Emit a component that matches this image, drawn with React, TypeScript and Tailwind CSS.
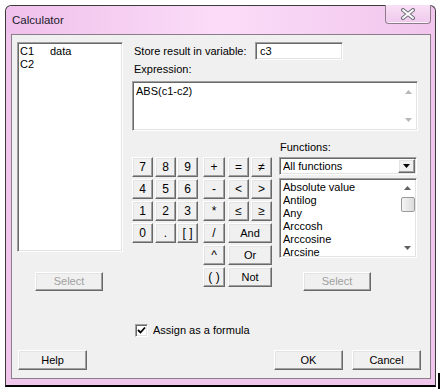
import { ReactNode } from "react";

const raised =
  "flex items-center justify-center bg-[#f0f0f0] border border-t-white border-l-white border-r-[#696969] border-b-[#696969] shadow-[inset_-1px_-1px_0_#a0a0a0,inset_1px_1px_0_#e3e3e3]";
const sunken =
  "bg-white border border-t-[#a0a0a0] border-l-[#a0a0a0] border-r-white border-b-white shadow-[inset_1px_1px_0_#696969,inset_-1px_-1px_0_#e3e3e3]";

function Btn({ children, className = "", disabled = false }: { children: ReactNode; className?: string; disabled?: boolean }) {
  return (
    <div className={`${raised} ${disabled ? "text-[#a0a0a0]" : "text-black"} ${className}`}>{children}</div>
  );
}

function UpArrow({ color }: { color: string }) {
  return (
    <svg width="7" height="4" viewBox="0 0 7 4">
      <path d="M3.5 0 L7 4 L0 4 Z" fill={color} />
    </svg>
  );
}

function DownArrow({ color }: { color: string }) {
  return (
    <svg width="7" height="4" viewBox="0 0 7 4">
      <path d="M0 0 L7 0 L3.5 4 Z" fill={color} />
    </svg>
  );
}

const functions = ["Absolute value", "Antilog", "Any", "Arccosh", "Arccosine", "Arcsine"];

export default function App() {
  return (
    <div className="relative w-[441px] h-[391px] bg-white font-['Liberation_Sans',Arial,sans-serif] text-[11px] leading-[13px] text-black overflow-hidden">
      <div className="ml-[5px] mt-[5px] w-[431px] h-[382px] flex flex-col border border-[#3c3c3c] border-b-2 border-b-black rounded-t-[6px] bg-[#f1c6ed]">
        {/* title bar */}
        <div className="flex h-[28px] rounded-t-[6px] bg-linear-to-r from-[#efc0eb] via-[#fbdcf8] to-[#f1c5ed]">
          <div className="pl-[6px] flex items-center pt-[1px] text-[11.5px] text-[#1a1a2a]">Calculator</div>
          <div className="ml-auto mr-[4px] -mt-px w-[46px] h-[19px] flex items-center justify-center rounded-b-[4px] border border-t-0 border-[#8c7c8a] bg-linear-to-b from-[#f8e0f6] to-[#efc8ec] shadow-[inset_0_-1px_0_#fff3fd]">
            <svg width="16" height="12" viewBox="0 0 16 12">
              <path d="M3 2 L13 10 M13 2 L3 10" stroke="#6f6f7a" strokeWidth="4" strokeLinecap="round" />
              <path d="M3 2 L13 10 M13 2 L3 10" stroke="#ffffff" strokeWidth="2" strokeLinecap="round" />
            </svg>
          </div>
        </div>

        {/* client area */}
        <div className="ml-[5px] w-[420px] h-[345px] border border-[#8a7f89] bg-[#f0f0f0] flex flex-col">
          <div className="flex pt-[7px] pl-[5px]">
            {/* variables */}
            <div className="w-[106px] flex flex-col">
              <div className={`${sunken} h-[210px] pl-[2px] pt-[2px]`}>
                <div className="flex">
                  <span className="w-[30px]">C1</span>
                  <span>data</span>
                </div>
                <div>C2</div>
              </div>
              <Btn disabled className="mt-[20px] ml-[18px] w-[68px] h-[19px]">Select</Btn>
            </div>

            {/* right side */}
            <div className="ml-[9px] w-[286px] flex flex-col">
              <div className="flex items-center h-[18px]">
                <span className="pl-[2px] w-[123px]">Store result in variable:</span>
                <div className={`${sunken} w-[88px] h-[18px] pl-[4px] flex items-center`}>c3</div>
              </div>
              <div className="mt-[3px] h-[13px] pl-[2px]">Expression:</div>
              <div className={`${sunken} mt-[5px] h-[50px] flex`}>
                <div className="flex-1 pl-[3px] pt-[3px]">ABS(c1-c2)</div>
                <div className="w-[17px] flex flex-col items-center justify-between py-[8px]">
                  <UpArrow color="#b8b8b8" />
                  <DownArrow color="#b8b8b8" />
                </div>
              </div>

              <div className="flex items-start">
                {/* keypad */}
                <div className="mt-[26px] w-[140px] grid grid-cols-[23px_22px_26px_25px_23px_21px] auto-rows-[20px] gap-y-[2px] text-[12px]">
                  {["7", "8", "9"].map((k) => (
                    <Btn key={k} className="w-[21px] h-[20px]">{k}</Btn>
                  ))}
                  <Btn className="w-[22px] h-[20px]">+</Btn>
                  <Btn className="w-[21px] h-[20px]">=</Btn>
                  <Btn className="w-[21px] h-[20px]">≠</Btn>
                  {["4", "5", "6"].map((k) => (
                    <Btn key={k} className="w-[21px] h-[20px]">{k}</Btn>
                  ))}
                  <Btn className="w-[22px] h-[20px]">-</Btn>
                  <Btn className="w-[21px] h-[20px]">&lt;</Btn>
                  <Btn className="w-[21px] h-[20px]">&gt;</Btn>
                  {["1", "2", "3"].map((k) => (
                    <Btn key={k} className="w-[21px] h-[20px]">{k}</Btn>
                  ))}
                  <Btn className="w-[22px] h-[20px]">*</Btn>
                  <Btn className="w-[21px] h-[20px]">≤</Btn>
                  <Btn className="w-[21px] h-[20px]">≥</Btn>
                  {["0", ".", "[ ]"].map((k) => (
                    <Btn key={k} className="w-[21px] h-[20px]">{k}</Btn>
                  ))}
                  <Btn className="w-[22px] h-[20px]">/</Btn>
                  <Btn className="col-span-2 w-[44px] h-[20px] text-[11px]">And</Btn>
                  <Btn className="col-start-4 w-[22px] h-[20px]">^</Btn>
                  <Btn className="col-span-2 w-[44px] h-[20px] text-[11px]">Or</Btn>
                  <Btn className="col-start-4 w-[22px] h-[20px]">( )</Btn>
                  <Btn className="col-span-2 w-[44px] h-[20px] text-[11px]">Not</Btn>
                </div>

                {/* functions */}
                <div className="ml-[7px] mt-[10px] w-[138px] flex flex-col">
                  <div className="h-[13px] pl-px">Functions:</div>
                  <div className={`${sunken} mt-[3px] h-[18px] flex items-center`}>
                    <span className="flex-1 pl-[3px]">All functions</span>
                    <div className={`${raised} w-[17px] h-[14px] mr-[1px]`}>
                      <svg width="7" height="4" viewBox="0 0 7 4">
                        <path d="M0 0 L7 0 L3.5 4 Z" fill="#000" />
                      </svg>
                    </div>
                  </div>
                  <div className={`${sunken} mt-[3px] h-[80px] flex`}>
                    <div className="flex-1 pl-[3px] pt-[2px] overflow-hidden">
                      {functions.map((f) => (
                        <div key={f} className="h-[13px]">{f}</div>
                      ))}
                    </div>
                    <div className="w-[17px] flex flex-col items-center py-[2px]">
                      <div className="h-[14px] flex items-center">
                        <UpArrow color="#606060" />
                      </div>
                      <div className="w-[14px] h-[15px] mt-[2px] rounded-[2px] border border-[#9a9a9a] bg-linear-to-r from-[#f4f4f4] to-[#dcdcdc]" />
                      <div className="mt-auto h-[14px] flex items-center">
                        <DownArrow color="#606060" />
                      </div>
                    </div>
                  </div>
                  <Btn disabled className="mt-[14px] ml-[24px] w-[68px] h-[19px]">Select</Btn>
                </div>
              </div>
            </div>
          </div>

          {/* checkbox */}
          <div className="mt-[33px] ml-[123px] flex items-center h-[13px]">
            <div className={`${sunken} w-[13px] h-[13px] flex items-center justify-center`}>
              <svg width="9" height="9" viewBox="0 0 9 9">
                <path d="M1 4 L3.5 6.5 L8 1.5" stroke="#000" strokeWidth="1.8" fill="none" />
              </svg>
            </div>
            <span className="ml-[5px]">Assign as a formula</span>
          </div>

          {/* buttons */}
          <div className="mt-[13px] flex pl-[6px] pr-[9px]">
            <Btn className="w-[69px] h-[20px]">Help</Btn>
            <Btn className="ml-auto w-[69px] h-[20px]">OK</Btn>
            <Btn className="ml-[9px] w-[69px] h-[20px]">Cancel</Btn>
          </div>
        </div>
      </div>
      <div className="absolute left-[438px] top-[373px] w-[2px] h-[16px] bg-black" />
    </div>
  );
}
